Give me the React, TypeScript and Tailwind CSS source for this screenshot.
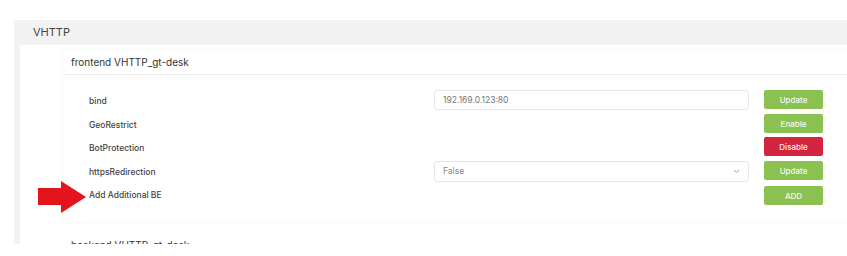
const font = { fontFamily: "Inter, 'Open Sans', sans-serif" };

const Btn = ({ label, red }: { label: string; red?: boolean }) => (
  <button
    className={`w-[59px] h-[19px] rounded-[2px] text-[8px] font-medium text-white/90 ${
      red ? "bg-[#d3253f]" : "bg-[#8bc150]"
    }`}
  >
    {label}
  </button>
);

const App = () => {
  return (
    <main className="relative w-[847px] h-[256px] overflow-hidden bg-white pt-[20px] pl-[14px]" style={font}>
      <section className="bg-[#f2f2f2] h-[224px] overflow-hidden">
        <div className="h-[25px] flex items-center pl-[19px] text-[11px] text-[#444]">VHTTP</div>
        <div className="ml-[6px] bg-white h-full pt-[5px] pl-[43px]">
          <div className="bg-white shadow-[0_0_3px_rgba(0,0,0,0.06)] rounded-sm">
            <div className="h-[25px] flex items-center pl-[8px] text-[10px] text-[#333] border-b border-[#eeeeee]">
              frontend VHTTP_gt-desk
            </div>
            <div className="pt-[15px] pb-[17px] pl-[26px] text-[8.5px] font-medium text-[#444]">
              <div className="flex items-start h-[24px]">
                <p className="w-[345px] pt-[5px]">bind</p>
                <div className="w-[315px] h-[20px] border border-[#e6e6e6] rounded-[3px] flex items-center pl-[8px] text-[#777] font-normal">
                  192.169.0.123:80
                </div>
                <div className="ml-[15px]"><Btn label="Update" /></div>
              </div>
              <div className="flex items-start h-[23px]">
                <p className="w-[660px] pt-[5px]">GeoRestrict</p>
                <div className="ml-[15px]"><Btn label="Enable" /></div>
              </div>
              <div className="flex items-start h-[24px]">
                <p className="w-[660px] pt-[5px]">BotProtection</p>
                <div className="ml-[15px]"><Btn label="Disable" red /></div>
              </div>
              <div className="flex items-start h-[25px]">
                <p className="w-[345px] pt-[5px]">httpsRedirection</p>
                <div className="w-[315px] h-[21px] border border-[#e6e6e6] rounded-[3px] flex items-center justify-between px-[8px] text-[#888] font-normal">
                  <span>False</span>
                  <svg width="7" height="5" viewBox="0 0 7 5" fill="none">
                    <path d="M1 1l2.5 2.5L6 1" stroke="#999" strokeWidth="0.9" />
                  </svg>
                </div>
                <div className="ml-[15px]"><Btn label="Update" /></div>
              </div>
              <div className="flex items-center h-[19px]">
                <p className="w-[660px]">Add Additional BE</p>
                <div className="ml-[15px]"><Btn label="ADD" /></div>
              </div>
            </div>
          </div>
          <p className="mt-[16px] pl-[8px] text-[10px] text-[#333]">backend VHTTP_gt-desk</p>
        </div>
      </section>
      <svg className="absolute left-[37px] top-[180px]" width="50" height="34" viewBox="0 0 50 34">
        <path d="M1 8 H24 V1 L49 17 L24 33 V25 H1 Z" fill="#e3141b" />
      </svg>
    </main>
  );
};

export default App;
